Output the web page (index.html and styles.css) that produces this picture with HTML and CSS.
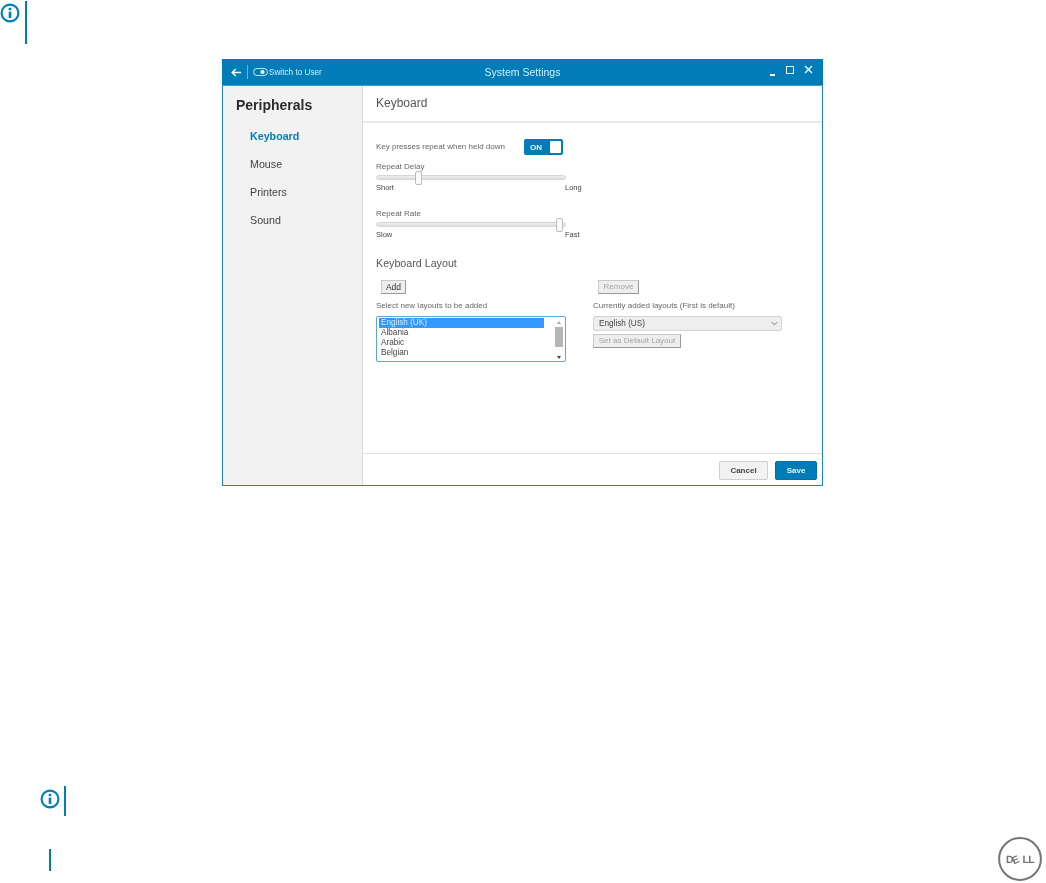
FILE: index.html
```html
<!DOCTYPE html>
<html lang="en">
<head>
<meta charset="utf-8">
<title>System Settings</title>
<link rel="stylesheet" href="styles.css">
</head>
<body>
<div class="page">
  <div class="note note-top">
    <svg class="info" viewBox="0 0 20 20"><circle cx="10" cy="10" r="8.4" fill="none" stroke="#007db8" stroke-width="2.1"/><rect x="8.7" y="8.6" width="2.6" height="6.4" fill="#007db8"/><rect x="8.7" y="4.8" width="2.6" height="2.4" fill="#007db8"/></svg>
    <div class="bar"></div>
  </div>

  <div class="window">
    <div class="titlebar">
      <div class="tb-left">
        <svg class="back" viewBox="0 0 12 10"><path d="M5.2 1 1.2 5l4 4M1.4 5H11" fill="none" stroke="#fff" stroke-width="1.5"/></svg>
        <span class="tb-sep"></span>
        <svg class="switch" viewBox="0 0 15 8"><rect x=".5" y=".5" width="14" height="7" rx="3.5" fill="none" stroke="#fff" stroke-width=".8"/><circle cx="9.5" cy="4" r="2.1" fill="#fff"/></svg>
        <span class="tb-user">Switch to User</span>
      </div>
      <div class="tb-title">System Settings</div>
      <div class="tb-right">
        <span class="tb-min"></span>
        <span class="tb-max"></span>
        <svg class="tb-close" viewBox="0 0 9 9"><path d="M1 1l7 7M8 1 1 8" stroke="#fff" stroke-width="1.4"/></svg>
      </div>
    </div>
    <div class="body">
      <nav class="sidebar">
        <h1 class="side-title">Peripherals</h1>
        <a class="side-item active">Keyboard</a>
        <a class="side-item">Mouse</a>
        <a class="side-item">Printers</a>
        <a class="side-item">Sound</a>
      </nav>
      <main class="main">
        <div class="main-head">Keyboard</div>
        <div class="content">
          <div class="repeat-row">
            <span class="lbl">Key presses repeat when held down</span>
            <div class="toggle"><span class="toggle-on">ON</span><span class="toggle-knob"></span></div>
          </div>
          <div class="lbl slider-title">Repeat Delay</div>
          <div class="slider"><span class="track"></span><span class="knob knob-delay"></span></div>
          <div class="ends"><span>Short</span><span>Long</span></div>
          <div class="lbl slider-title rate-title">Repeat Rate</div>
          <div class="slider"><span class="track"></span><span class="knob knob-rate"></span></div>
          <div class="ends"><span>Slow</span><span>Fast</span></div>
          <h2 class="layout-title">Keyboard Layout</h2>
          <div class="cols">
            <div class="col-left">
              <button class="btn btn-add">Add</button>
              <div class="lbl col-lbl">Select new layouts to be added</div>
              <div class="listbox">
                <div class="options">
                  <div class="opt sel">English (UK)</div>
                  <div class="opt">Albania</div>
                  <div class="opt">Arabic</div>
                  <div class="opt">Belgian</div>
                </div>
                <div class="scroll">
                  <span class="arrow-up"></span>
                  <span class="thumb"></span>
                  <span class="arrow-down"></span>
                </div>
              </div>
            </div>
            <div class="col-right">
              <button class="btn btn-remove">Remove</button>
              <div class="lbl col-lbl">Currently added layouts (First is default)</div>
              <div class="select"><span>English (US)</span><svg class="chev" viewBox="0 0 8 5"><path d="M1 1l3 3 3-3" fill="none" stroke="#666" stroke-width="1"/></svg></div>
              <button class="btn btn-default">Set as Default Layout</button>
            </div>
          </div>
        </div>
        <div class="foot">
          <button class="act act-cancel">Cancel</button>
          <button class="act act-save">Save</button>
        </div>
      </main>
    </div>
  </div>

  <div class="note note-bottom">
    <svg class="info" viewBox="0 0 20 20"><circle cx="10" cy="10" r="8.4" fill="none" stroke="#007db8" stroke-width="2.1"/><rect x="8.7" y="8.6" width="2.6" height="6.4" fill="#007db8"/><rect x="8.7" y="4.8" width="2.6" height="2.4" fill="#007db8"/></svg>
    <div class="bar"></div>
  </div>

  <div class="pagefoot">
    <div class="bar foot-bar"></div>
    <svg class="dell" viewBox="0 0 44 44">
      <circle cx="22" cy="22" r="20.9" fill="none" stroke="#757575" stroke-width="2"/>
      <text class="dell-t" x="8" y="26">D</text>
      <text class="dell-t" transform="translate(15.8 27.4) rotate(-24)" x="0" y="0">E</text>
      <text class="dell-t" x="24.6" y="26">L</text>
      <text class="dell-t" x="30.2" y="26">L</text>
    </svg>
  </div>
</div>
</body>
</html>
```
FILE: styles.css
```css
* { box-sizing: border-box; }
html, body { margin: 0; padding: 0; background: #fff; }
body { font-family: "Liberation Sans", Arial, sans-serif; }
.page { width: 1046px; height: 883px; overflow: hidden; }

.bar { width: 2px; background: #007db8; }
.info { width: 20px; height: 20px; display: block; }
.note { display: flex; }
.note-top { height: 43px; margin-top: 1px; gap: 5px; }
.note-top .info { margin-top: 2px; }
.note-bottom { height: 30px; margin: 300px 0 0 40px; gap: 4px; }
.note-bottom .info { margin-top: 3px; }

.window {
  width: 601px; height: 427px; margin: 15px 0 0 222px;
  border: 1px solid #1c87bf; border-top: 0;
  display: flex; flex-direction: column; background: #fff;
  filter: blur(.5px);
}
.titlebar {
  height: 27px; margin: 0 -1px; background: #007db8; color: #fff;
  display: flex; align-items: center; position: relative; flex: none;
  border-bottom: 1px solid #3f9ccb;
}
.tb-left { display: flex; align-items: center; padding-left: 9px; }
.back { width: 11px; height: 9px; }
.tb-sep { width: 1px; height: 14px; background: #6db3d6; margin: 0 5px; }
.switch { width: 15px; height: 8px; margin-right: 1px; }
.tb-user { font-size: 8.2px; color: #d8ecf6; }
.tb-title {
  position: absolute; left: 0; right: 0; top: 0; bottom: 0;
  display: flex; align-items: center; justify-content: center;
  font-size: 10.5px; color: #d8ecf6;
}
.tb-right { margin-left: auto; display: flex; align-items: center; padding-right: 10px; height: 100%; }
.tb-min { width: 5px; height: 1.5px; background: #fff; margin: 6px 11px 0 0; }
.tb-max { width: 8px; height: 8px; border: 1.4px solid #fff; margin: -4px 10px 0 0; }
.tb-close { width: 9px; height: 9px; margin-top: -6px; }

.body { flex: 1; display: flex; min-height: 0; }
.sidebar { width: 140px; background: #f2f2f2; border-right: 1px solid #dcdcdc; padding: 9px 0 0 13px; flex: none; }
.side-title { margin: 0 0 7px; font-size: 14px; line-height: 20px; font-weight: 700; color: #2b2b2b; }
.side-item { display: block; padding-left: 14px; font-size: 10.7px; line-height: 28px; height: 28px; color: #444; }
.side-item.active { color: #007db8; font-weight: 700; }

.main { flex: 1; display: flex; flex-direction: column; min-width: 0; }
.main-head { height: 37px; border-bottom: 2px solid #e8e8e8; padding: 10px 0 0 13px; font-size: 12px; line-height: 14px; color: #555; flex: none; }
.content { flex: 1; padding: 16px 0 0 13px; }
.lbl { font-size: 8px; line-height: 10px; color: #666; }
.repeat-row { display: flex; align-items: center; height: 16px; gap: 19px; }
.toggle { width: 39px; height: 16px; background: #007db8; border-radius: 2px; display: flex; align-items: center; justify-content: space-between; padding: 0 2px 0 6px; }
.toggle-on { font-size: 8px; font-weight: 700; color: #e6f3fa; }
.toggle-knob { width: 11px; height: 12px; background: #fff; border-radius: 1px; }
.slider-title { margin-top: 7px; }
.slider { position: relative; width: 190px; height: 6px; margin-top: 3px; }
.track { display: block; height: 5px; border: 1px solid #d6d6d6; border-radius: 3px; background: linear-gradient(#eee, #ddd); }
.knob { position: absolute; top: -4px; width: 7px; height: 14px; background: #fafafa; border: 1px solid #bdbdbd; border-radius: 2px; }
.knob-delay { left: 39px; }
.knob-rate { left: 180px; }
.ends { display: grid; grid-template-columns: 189px auto; width: 210px; font-size: 7.5px; line-height: 9px; color: #444; margin-top: 2px; }
.rate-title { margin-top: 17px; }
.layout-title { margin: 17px 0 0; font-size: 10.7px; line-height: 14px; font-weight: 400; color: #555; }
.cols { display: flex; margin-top: 10px; }
.col-left { width: 217px; flex: none; }
.col-right { width: 190px; flex: none; }
.btn { display: block; margin: 0; padding: 0; height: 14px; font: 8px/12px "Liberation Sans", Arial, sans-serif; color: #333; background: #eee; border: 1px solid #c8c8c8; border-right-color: #999; border-bottom-color: #999; }
.btn-add { width: 25px; margin-left: 5px; font-size: 8.5px; }
.btn-remove { width: 41px; margin-left: 5px; color: #a5a5a5; }
.btn-default { width: 88px; margin-top: 3px; color: #a5a5a5; }
.col-lbl { margin-top: 7px; }
.listbox { width: 190px; height: 46px; margin-top: 5px; border: 1px solid #5aa9d3; border-radius: 2px; display: flex; padding: 1px 0 0 2px; }
.options { width: 165px; flex: none; }
.opt { font-size: 8.2px; line-height: 10px; height: 10px; color: #444; padding-left: 2px; }
.opt.sel { background: #3399ff; color: #d6e9ff; }
.scroll { width: 10px; margin-left: 10px; display: flex; flex-direction: column; align-items: center; padding-top: 3px; }
.arrow-up { border: 2.5px solid transparent; border-top: 0; border-bottom: 3px solid #aaa; }
.thumb { width: 8px; height: 20px; background: #b5b5b5; margin-top: 3px; }
.arrow-down { border: 2.5px solid transparent; border-bottom: 0; border-top: 3px solid #444; margin-top: 9px; }
.select { width: 189px; height: 15px; margin-top: 5px; background: #eee; border: 1px solid #d4d4d4; border-radius: 2px; display: flex; align-items: center; justify-content: space-between; padding: 0 3px 0 5px; font-size: 8.2px; color: #444; }
.chev { width: 7px; height: 5px; }

.foot { height: 32px; border-top: 1px solid #dedede; display: flex; align-items: flex-start; justify-content: flex-end; gap: 7px; padding: 7px 5px 0 0; flex: none; }
.act { height: 19px; padding: 0; font: 700 8px/17px "Liberation Sans", Arial, sans-serif; border-radius: 2px; }
.act-cancel { width: 49px; background: #f2f2f2; color: #444; border: 1px solid #cfcfcf; }
.act-save { width: 42px; background: #007db8; color: #e6f3fa; border: 1px solid #006fa5; }

.pagefoot { height: 46px; margin: 21px 0 0 49px; display: flex; justify-content: space-between; }
.foot-bar { height: 22px; margin-top: 12px; }
.dell { width: 44px; height: 44px; margin-right: 4px; filter: blur(.3px); text-rendering: geometricPrecision; }
.dell-t { font: 700 10.5px "Liberation Sans", Arial, sans-serif; fill: #757575; }
```
